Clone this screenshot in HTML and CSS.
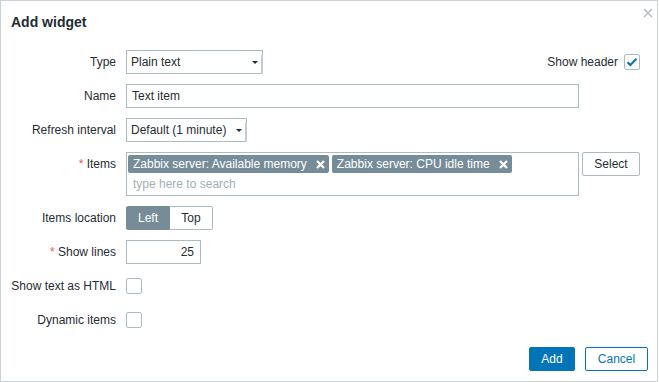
FILE: index.html
```html
<!DOCTYPE html>
<html lang="en">
<head>
<meta charset="utf-8">
<title>Add widget</title>
<link rel="stylesheet" href="styles.css">
</head>
<body>
<div class="dialog">
  <div class="dialog-head">
    <h4 class="dialog-title">Add widget</h4>
    <button class="dialog-close" type="button" aria-label="Close">
      <svg width="10" height="10" viewBox="0 0 10 10"><path d="M1 1L9 9M9 1L1 9" stroke="#b4bfc5" stroke-width="1.6" fill="none"/></svg>
    </button>
  </div>

  <form class="form-grid">
    <label class="form-label">Type</label>
    <div class="form-field field-split">
      <div class="select select-type"><span>Plain text</span><i class="select-arrow"></i></div>
      <div class="inline-check">
        <span>Show header</span>
        <span class="checkbox">
          <svg width="14" height="14" viewBox="0 0 14 14"><path d="M2.5 7.2L5.3 10L11.5 3.8" stroke="#0275b8" stroke-width="2" fill="none"/></svg>
        </span>
      </div>
    </div>

    <label class="form-label">Name</label>
    <div class="form-field">
      <div class="input input-wide">Text item</div>
    </div>

    <label class="form-label">Refresh interval</label>
    <div class="form-field">
      <div class="select select-refresh"><span>Default (1 minute)</span><i class="select-arrow"></i></div>
    </div>

    <label class="form-label"><span class="req">*</span> Items</label>
    <div class="form-field field-items">
      <div class="multiselect">
        <div class="tags">
          <span class="tag">Zabbix server: Available memory<svg class="tag-x" width="9" height="9" viewBox="0 0 9 9"><path d="M1 1L8 8M8 1L1 8" stroke="#fff" stroke-width="2.2" fill="none"/></svg></span>
          <span class="tag">Zabbix server: CPU idle time<svg class="tag-x" width="9" height="9" viewBox="0 0 9 9"><path d="M1 1L8 8M8 1L1 8" stroke="#fff" stroke-width="2.2" fill="none"/></svg></span>
        </div>
        <div class="ms-search">type here to search</div>
      </div>
      <button class="btn-alt" type="button">Select</button>
    </div>

    <label class="form-label">Items location</label>
    <div class="form-field">
      <div class="segmented">
        <span class="seg seg-on">Left</span>
        <span class="seg">Top</span>
      </div>
    </div>

    <label class="form-label"><span class="req">*</span> Show lines</label>
    <div class="form-field">
      <div class="input input-num">25</div>
    </div>

    <label class="form-label">Show text as HTML</label>
    <div class="form-field">
      <span class="checkbox"></span>
    </div>

    <label class="form-label">Dynamic items</label>
    <div class="form-field">
      <span class="checkbox"></span>
    </div>
  </form>

  <div class="dialog-foot">
    <button class="btn-main" type="button">Add</button>
    <button class="btn-secondary" type="button">Cancel</button>
  </div>
</div>
</body>
</html>
```

FILE: styles.css
```css
* { box-sizing: border-box; }

html, body {
  margin: 0;
  padding: 0;
  background: #ffffff;
}

body {
  font-family: "Liberation Sans", Arial, sans-serif;
  font-size: 12px;
  color: #1f2c33;
}

.dialog {
  width: 658px;
  height: 382px;
  border: 1px solid #c8d1d6;
  padding: 0 9px 0 9px;
  background: #fff;
}

.dialog-head {
  display: flex;
  justify-content: space-between;
  align-items: flex-start;
  padding-top: 7px;
  margin-right: -5px;
  height: 49px;
}

.dialog-title {
  margin: 0;
  padding-top: 6px;
  padding-left: 1px;
  font-size: 14px;
  line-height: 16px;
  font-weight: bold;
  color: #1f2c33;
}

.dialog-close {
  border: 0;
  background: none;
  padding: 0;
  width: 10px;
  height: 10px;
  display: flex;
}

.form-grid {
  display: grid;
  grid-template-columns: 106px 514px;
  column-gap: 10px;
  row-gap: 10px;
  margin: 0;
}

.form-label {
  text-align: right;
  white-space: nowrap;
  line-height: 24px;
  height: 24px;
}

.req {
  color: #e45959;
}

.form-field {
  display: flex;
  align-items: center;
  min-height: 24px;
}

.field-split {
  justify-content: space-between;
}

.field-items {
  align-items: flex-start;
  gap: 3px;
}

.select {
  position: relative;
  height: 24px;
  border: 1px solid #acbbc2;
  background: #fff;
  padding: 0 4px;
  line-height: 22px;
  white-space: nowrap;
}

.select::after {
  content: "";
  position: absolute;
  right: -1px;
  top: 4px;
  bottom: -1px;
  width: 2px;
  background: #c3ccd1;
}

.select-type { width: 137px; }
.select-refresh { width: 121px; }

.select-arrow {
  position: absolute;
  right: 4px;
  top: 10px;
  width: 0;
  height: 0;
  border-left: 3px solid transparent;
  border-right: 3px solid transparent;
  border-top: 3px solid #1f2c33;
}

.inline-check {
  display: flex;
  align-items: center;
  gap: 6px;
}

.checkbox {
  display: flex;
  align-items: center;
  justify-content: center;
  width: 16px;
  height: 16px;
  border: 1px solid #acbbc2;
  border-radius: 2px;
  background: #fff;
}

.input {
  height: 24px;
  border: 1px solid #acbbc2;
  background: #fff;
  padding: 0 5px;
  line-height: 22px;
}

.input-wide { width: 453px; }

.input-num {
  width: 75px;
  text-align: right;
  padding-right: 6px;
}

.multiselect {
  width: 453px;
  height: 44px;
  border: 1px solid #acbbc2;
  background: #fff;
  padding: 2px 0 0 1px;
}

.tags {
  display: flex;
  gap: 3px;
}

.tag {
  display: flex;
  align-items: center;
  height: 18px;
  padding: 0 4px 0 5px;
  background: #768d99;
  color: #fff;
  border-radius: 2px;
  white-space: nowrap;
}

.tag-x {
  margin-left: 9px;
}

.ms-search {
  height: 22px;
  line-height: 22px;
  padding-left: 5px;
  color: #a3afb5;
}

.btn-alt {
  width: 58px;
  height: 24px;
  padding: 0;
  border: 1px solid #acbbc2;
  border-radius: 2px;
  background: #fff;
  color: #1f2c33;
  font-family: inherit;
  font-size: 12px;
}

.segmented {
  display: flex;
  height: 24px;
}

.seg {
  height: 24px;
  line-height: 22px;
  border: 1px solid #acbbc2;
  text-align: center;
}

.seg-on {
  width: 44px;
  background: #768d99;
  border-color: #768d99;
  color: #fff;
  border-radius: 2px 0 0 2px;
}

.seg + .seg {
  width: 43px;
  border-left: 0;
  border-radius: 0 2px 2px 0;
}

.dialog-foot {
  display: flex;
  justify-content: flex-end;
  gap: 10px;
  margin-top: 15px;
}

.btn-main,
.btn-secondary {
  height: 24px;
  padding: 0;
  border-radius: 2px;
  font-family: inherit;
  font-size: 12px;
  border: 1px solid #0275b8;
}

.btn-main {
  width: 46px;
  background: #0275b8;
  color: #fff;
}

.btn-secondary {
  width: 63px;
  background: #fff;
  color: #0275b8;
}
```
